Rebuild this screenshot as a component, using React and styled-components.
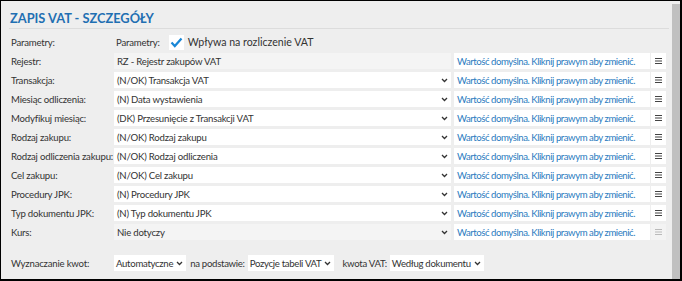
import React from "react";
import styled, { createGlobalStyle } from "styled-components";

const Global = createGlobalStyle`
  html, body { margin: 0; padding: 0; background: #ffffff; }
  body { font-family: Lato, "Noto Sans", sans-serif; }
`;

const Frame = styled.div`
  box-sizing: border-box;
  width: 682px;
  height: 281px;
  border: 1px solid #000;
  border-right-width: 2px;
  border-bottom-width: 2px;
  background: #eeeeee;
  display: flex;
  overflow: hidden;
`;

const Content = styled.div`
  flex: 1;
  padding: 6px 3px 0 8px;
  display: flex;
  flex-direction: column;
  font-size: 9.6px;
  letter-spacing: -0.2px;
  color: #333;
`;

const Scrollbar = styled.div`
  width: 8px;
  margin-top: 3px;
  background: #c0c0c0;
`;

const Title = styled.div`
  font-weight: 700;
  font-size: 12.8px;
  letter-spacing: 0;
  color: #1f6fb2;
  padding: 2px 0 0 1px;
  height: 19px;
  line-height: 19px;
  border-bottom: 1px solid #dcdcdc;
`;

const Grid = styled.div`
  display: grid;
  grid-template-columns: 105px 337px 199px 16px;
  grid-auto-rows: 16px;
  row-gap: 3px;
  margin-top: 5px;
  align-items: center;
`;

const Label = styled.div`
  padding-left: 2px;
  white-space: nowrap;
  overflow: hidden;
`;

const ParamCell = styled.div`
  grid-column: 2 / 5;
  display: flex;
  align-items: center;
  padding-left: 2px;
`;

const Check = styled.span`
  width: 15px;
  height: 15px;
  background: #fff;
  display: inline-flex;
  align-items: center;
  justify-content: center;
  margin: 0 4px 0 9px;
`;

const CheckText = styled.span`
  font-size: 10.6px;
  letter-spacing: 0;
`;

const Field = styled.div`
  height: 16px;
  display: flex;
  align-items: center;
  justify-content: space-between;
  padding: 0 3px 0 3px;
  background: ${(p) => (p.$disabled ? "#f4f4f4" : "#ffffff")};
  white-space: nowrap;
  box-sizing: border-box;
`;

const Hint = styled.div`
  height: 16px;
  margin-left: 3px;
  padding-left: 3px;
  background: #fff;
  color: #2a7bc0;
  letter-spacing: -0.45px;
  display: flex;
  align-items: center;
  white-space: nowrap;
  overflow: hidden;
  box-sizing: border-box;
`;

const MenuBtn = styled.div`
  height: 16px;
  margin-left: 1px;
  background: #fff;
  display: flex;
  align-items: center;
  justify-content: center;
  opacity: ${(p) => (p.$disabled ? 0.3 : 1)};
`;

const Bottom = styled.div`
  display: flex;
  align-items: center;
  margin-top: 15px;
  height: 16px;
  letter-spacing: -0.3px;
`;

const BLabel = styled.span`
  width: 105px;
  padding-left: 2px;
  box-sizing: border-box;
  letter-spacing: -0.2px;
`;

const Inline = styled.span`
  margin: 0 ${(p) => p.$r || 3}px 0 ${(p) => p.$l || 4}px;
`;

const Select = styled.div`
  height: 16px;
  background: #fff;
  display: flex;
  align-items: center;
  gap: 3px;
  padding: 0 3px 0 2px;
  white-space: nowrap;
`;

const Chevron = () => (
  <svg width="7" height="5" viewBox="0 0 7 5">
    <polyline points="1,1 3.5,3.5 6,1" fill="none" stroke="#333" strokeWidth="1.3" />
  </svg>
);

const Menu = () => (
  <svg width="7" height="6" viewBox="0 0 7 6">
    <rect x="0" y="0" width="7" height="1" fill="#444" />
    <rect x="0" y="2.5" width="7" height="1" fill="#444" />
    <rect x="0" y="5" width="7" height="1" fill="#444" />
  </svg>
);

const rows = [
  { label: "Rejestr:", value: "RZ - Rejestr zakupów VAT", disabled: true, chevron: false },
  { label: "Transakcja:", value: "(N/OK) Transakcja VAT" },
  { label: "Miesiąc odliczenia:", value: "(N) Data wystawienia" },
  { label: "Modyfikuj miesiąc:", value: "(DK) Przesunięcie z Transakcji VAT" },
  { label: "Rodzaj zakupu:", value: "(N/OK) Rodzaj zakupu" },
  { label: "Rodzaj odliczenia zakupu:", value: "(N/OK) Rodzaj odliczenia" },
  { label: "Cel zakupu:", value: "(N/OK) Cel zakupu" },
  { label: "Procedury JPK:", value: "(N) Procedury JPK" },
  { label: "Typ dokumentu JPK:", value: "(N) Typ dokumentu JPK" },
  { label: "Kurs:", value: "Nie dotyczy", disabled: true, menuDisabled: true },
];

export default function App() {
  return (
    <>
      <Global />
      <Frame>
        <Content>
          <Title>ZAPIS VAT - SZCZEGÓŁY</Title>
          <Grid>
            <Label>Parametry:</Label>
            <ParamCell>
              Parametry:
              <Check>
                <svg width="13" height="11" viewBox="0 0 13 11">
                  <polyline points="1.5,5.5 4.8,9 11.5,1.5" fill="none" stroke="#1a87d6" strokeWidth="2.2" />
                </svg>
              </Check>
              <CheckText>Wpływa na rozliczenie VAT</CheckText>
            </ParamCell>
            {rows.map((r) => (
              <React.Fragment key={r.label}>
                <Label>{r.label}</Label>
                <Field $disabled={r.disabled}>
                  <span>{r.value}</span>
                  {r.chevron !== false && <Chevron />}
                </Field>
                <Hint>Wartość domyślna. Kliknij prawym aby zmienić.</Hint>
                <MenuBtn $disabled={r.menuDisabled}>
                  <Menu />
                </MenuBtn>
              </React.Fragment>
            ))}
          </Grid>
          <Bottom>
            <BLabel>Wyznaczanie kwot:</BLabel>
            <Select>
              Automatyczne <Chevron />
            </Select>
            <Inline>na podstawie:</Inline>
            <Select>
              Pozycje tabeli VAT <Chevron />
            </Select>
            <Inline $l={8}>kwota VAT:</Inline>
            <Select>
              Według dokumentu <Chevron />
            </Select>
          </Bottom>
        </Content>
        <Scrollbar />
      </Frame>
    </>
  );
}
